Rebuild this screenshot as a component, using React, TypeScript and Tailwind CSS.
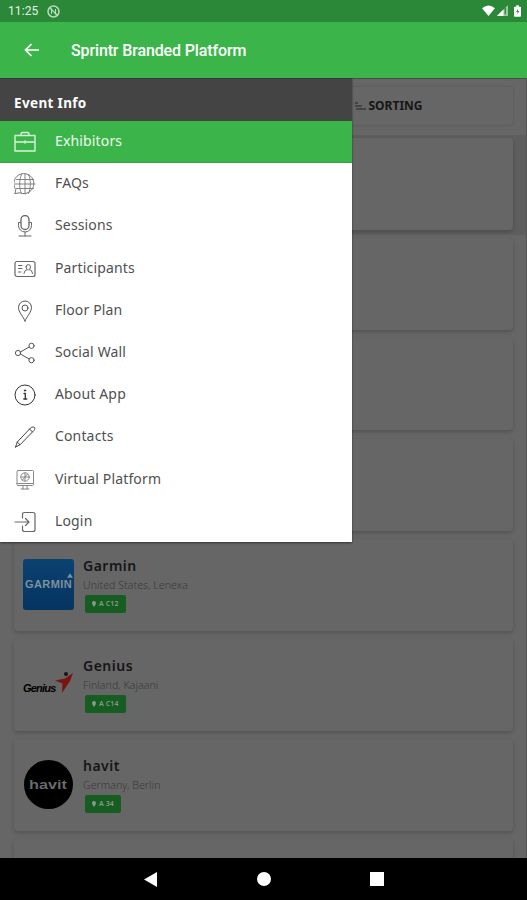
import React from 'react';

type IconProps = { children: React.ReactNode; className?: string };

// Thin outline icon on a 22px grid
const LineIcon: React.FC<IconProps> = ({ children, className }) => (
    <svg
        width="22"
        height="22"
        viewBox="0 0 22 22"
        fill="none"
        stroke="currentColor"
        strokeWidth="1"
        strokeLinecap="round"
        strokeLinejoin="round"
        className={className}
    >
        {children}
    </svg>
);

const menuItems = [
    {
        label: 'Exhibitors',
        icon: (
            <LineIcon className="text-[#d9f3dc]">
                <path strokeWidth="1.4" d="M1 4.500h20v15.500H1zM7 4.500V3Q7 1.500 8.500 1.500h5Q15 1.500 15 3v1.500M1 11h20" />
                <path d="M11 9.500v3" />
            </LineIcon>
        ),
    },
    {
        label: 'FAQs',
        icon: (
            <LineIcon className="text-[#777]">
                <path d="M1 20.500l.8-4A10 10 0 1 1 6 19.800L1 20.500z" />
                <path d="M11 1v20M2.500 6.500h17M1 11h20M2.500 15.500h17M7.500 1.500c-2.500 5-2.500 14 0 19M14.500 1.500c2.500 5 2.500 14 0 19" strokeWidth=".9" />
            </LineIcon>
        ),
    },
    {
        label: 'Sessions',
        icon: (
            <LineIcon className="text-[#666]">
                <rect x="7" y="0.500" width="8" height="14" rx="4" strokeWidth="1.300" />
                <path d="M6.500 7.500H4.500v3a6.500 6.500 0 0 0 13 0v-3h-2M11 17v4M5 21h12" />
            </LineIcon>
        ),
    },
    {
        label: 'Participants',
        icon: (
            <LineIcon className="text-[#666]">
                <rect x="1" y="3.500" width="20" height="15" rx="2" strokeWidth="1.200" />
                <path d="M4.500 7.500H8M4.500 10.500H8M4.500 14H7M10 15.500l1-2.800 1.800-.9M18.500 15.500l-1-2.800-1.800-.9M12.100 8.800a2.200 2.200 0 1 1 4.400 0c0 1.700-.9 3-2.200 3s-2.200-1.300-2.200-3z" />
            </LineIcon>
        ),
    },
    {
        label: 'Floor Plan',
        icon: (
            <LineIcon className="text-[#555]">
                <path d="M11 21C9.500 17 4.500 12 4.500 7.500a6.500 6.500 0 0 1 13 0C17.500 12 12.500 17 11 21z" />
                <circle cx="11" cy="8" r="3" />
            </LineIcon>
        ),
    },
    {
        label: 'Social Wall',
        icon: (
            <LineIcon className="text-[#555]">
                <circle cx="4" cy="11" r="2.600" />
                <circle cx="17.500" cy="3.800" r="2.600" />
                <circle cx="17.500" cy="18.200" r="2.600" />
                <path d="M6.400 10l8.800-5M6.400 12l8.800 5" />
            </LineIcon>
        ),
    },
    {
        label: 'About App',
        icon: (
            <LineIcon className="text-[#333]">
                <circle cx="11" cy="11" r="10" />
                <path d="M10 9.500h1.300V15M9.800 15h3" strokeWidth="1.300" />
                <circle cx="11" cy="6.500" r=".7" fill="currentColor" />
            </LineIcon>
        ),
    },
    {
        label: 'Contacts',
        icon: (
            <LineIcon className="text-[#444]">
                <path d="M1.500 21l1.800-5L16.500 2q1.200-1.200 2.800-1t1.500 1.300q0 1.200-1 2.300L6 18.800 1.500 21zM3.300 16L6 18.800M15.500 3l3 3" />
            </LineIcon>
        ),
    },
    {
        label: 'Virtual Platform',
        icon: (
            <LineIcon className="text-[#888]">
                <rect x="3" y="1.500" width="16.500" height="15" rx="1" />
                <circle cx="11" cy="8" r="4.200" />
                <path d="M7 8h8M11 4v8M8.500 11l5-6M3 14.500h16.500M9 17v3M13 17v3M7 20h8" />
            </LineIcon>
        ),
    },
    {
        label: 'Login',
        icon: (
            <LineIcon className="text-[#666]">
                <path d="M8.500 7V3.500q0-2 2-2H19q2 0 2 2v15q0 2-2 2h-8.500q-2 0-2-2V15" strokeWidth="1.200" />
                <path d="M1 11h14M11.500 7.500L15 11l-3.500 3.500" strokeWidth="1.200" />
            </LineIcon>
        ),
    },
];

const GarminLogo = () => (
    <div className="relative w-[51px] h-[51px] rounded-[3px] bg-linear-to-b from-[#0a4272] to-[#063460] overflow-hidden flex items-center justify-center text-[#7f8f9c]">
        <span className="font-['Liberation_Sans'] text-[11px] font-bold tracking-[0.4px]">GARMIN</span>
        <svg className="absolute left-[44px] top-[14px]" width="6" height="5" viewBox="0 0 7 5">
            <path d="M3.500 0L7 5H0z" fill="currentColor" />
        </svg>
    </div>
);

const GeniusLogo = () => (
    <div className="relative w-[51px] h-[51px]">
        <span className="absolute left-0 top-[21px] font-['Liberation_Sans'] text-[11px] leading-[16px] font-bold italic tracking-[-0.8px] text-black">
            Genius
        </span>
        <svg className="absolute left-[32px] top-[12px]" width="19" height="24" viewBox="0 0 19 24">
            <path d="M0 9.500l10-2L18 2l-3 8-8 12 .5-9.500z" fill="#781511" />
            <circle cx="11" cy="3" r="2" fill="#161616" />
        </svg>
    </div>
);

const HavitLogo = () => (
    <div className="w-[51px] h-[51px] flex items-center justify-center">
        <div className="w-[49px] h-[49px] rounded-full bg-black flex items-center justify-center">
            <span className="font-['Liberation_Sans'] text-[12px] leading-[14px] font-bold scale-x-[1.350] text-[#6a6a6a]">havit</span>
        </div>
    </div>
);

const exhibitors = [
    { name: 'Garmin', place: 'United States, Lenexa', booth: 'A C12', logo: <GarminLogo /> },
    { name: 'Genius', place: 'Finland, Kajaani', booth: 'A C14', logo: <GeniusLogo /> },
    { name: 'havit', place: 'Germany, Berlin', booth: 'A 34', logo: <HavitLogo /> },
];

const cardShadow = 'rounded-[4px] bg-[#666] shadow-[0_2px_4px_rgba(0,0,0,0.2)]';

const ExhibitorList = () => (
    <div className="flex flex-col">
        {/* Rows covered by the open menu, the first one is selected */}
        {[0, 1, 2, 3].map((row) => (
            <div key={row} className={`h-[100.2px] shrink-0 pl-[14px] pr-[13px] pt-[3px] ${row === 0 ? 'bg-[#5e5e5e]' : ''}`}>
                <div className={`h-[92px] ${cardShadow}`} />
            </div>
        ))}
        {exhibitors.map((item) => (
            <div key={item.name} className="h-[100.2px] shrink-0 pl-[14px] pr-[13px] pt-[3px]">
                <div className={`h-[92px] flex pl-[9px] pt-5 ${cardShadow}`}>
                    {item.logo}
                    <div className="ml-[9px] -mt-[3px] flex flex-col items-start">
                        <span className="text-[14px] leading-[20px] font-semibold tracking-[0.5px] text-[#161616]">{item.name}</span>
                        <span className="mt-px text-[10.500px] leading-[16px] font-light tracking-[0.090px] text-[#393939]">{item.place}</span>
                        <span className="mt-[2px] ml-[2px] h-[18px] px-[7px] rounded-[2px] bg-[#155d20] flex items-center gap-[3px] text-[7px] font-semibold tracking-[0.1px] text-[#8b978c]">
                            <svg width="4" height="6" viewBox="0 0 4 6" fill="currentColor">
                                <path d="M2 6Q0 3.500 0 2a2 2 0 0 1 4 0q0 1.500-2 4z" />
                            </svg>
                            {item.booth}
                        </span>
                    </div>
                </div>
            </div>
        ))}
        <div className="h-[100.2px] shrink-0 pl-[14px] pr-[13px] pt-[3px]">
            <div className={`h-[92px] ${cardShadow}`} />
        </div>
    </div>
);

const SideMenu = () => (
    <nav className="absolute left-0 top-0 w-[352px] bg-white shadow-[0_1px_2px_rgba(0,0,0,0.5)]">
        <div className="h-[42.500px] pt-[6px] pl-[14px] flex items-center bg-[#444] border-t border-[#37343b] text-[13.500px] font-bold tracking-[0.350px] text-white">
            Event Info
        </div>
        {menuItems.map((item, i) => (
            <div
                key={item.label}
                className={`h-[42.200px] pl-[14px] flex items-center gap-[19px] ${i === 0 ? 'bg-[#3bb54a] border-b border-[#22ab38] text-[#effaf0]' : 'text-[#505050]'}`}
            >
                <span className="mt-px">{item.icon}</span>
                <span className="-mt-px text-[14px] leading-[20px] tracking-[0.150px]">{item.label}</span>
            </div>
        ))}
    </nav>
);

export default function App() {
    return (
        <div className="w-[527px] h-[900px] flex flex-col overflow-hidden font-['Noto_Sans',sans-serif]">
            {/* Status bar */}
            <div className="h-[22px] shrink-0 flex items-center pl-[8px] pr-[6px] bg-[#2b8838] text-[#e2f1e3] font-['Roboto']">
                <span className="text-[12px] tracking-[0.1px]">11:25</span>
                <svg className="ml-[9px]" width="13" height="13" viewBox="0 0 13 13" fill="none" stroke="#b9dabc">
                    <circle cx="6.500" cy="6.500" r="5.500" strokeWidth="1.500" />
                    <path d="M4.500 9V4l4 5V4M3 3l7 7" strokeWidth="1.100" />
                </svg>
                <div className="ml-auto -mt-px flex items-center gap-[2px]">
                    <svg width="13" height="11" viewBox="0 0 14 12">
                        <path d="M0 3.500Q7-2.500 14 3.500L7 12z" fill="#fff" />
                    </svg>
                    <svg width="11" height="11" viewBox="0 0 12 12">
                        <path d="M12 0v12H0z" fill="#9acb9f" />
                        <path d="M7 5v7H0z" fill="#fff" />
                        <path d="M9 3v7" stroke="#2b8838" strokeWidth="1.500" />
                    </svg>
                    <svg className="ml-[4px]" width="7" height="12" viewBox="0 0 8 13">
                        <path d="M2.500 0h3v1.500H7q1 0 1 1V12q0 1-1 1H1q-1 0-1-1V2.500q0-1 1-1h1.500z" fill="#fff" />
                        <path d="M4.500 4L2.500 7.500H4V10l2-3.500H4.500z" fill="#2b8838" />
                    </svg>
                </div>
            </div>

            {/* App bar */}
            <header className="h-[56px] shrink-0 flex items-center pl-[24px] bg-[#3bb54a] text-white">
                <svg width="16" height="14" viewBox="0 0 16 14" fill="none" stroke="currentColor" strokeWidth="1.700">
                    <path d="M15 7H2M7.500 1L1.500 7l6 6" />
                </svg>
                <h1 className="ml-[31px] mt-[2px] font-['Roboto'] text-[16px] font-medium tracking-[-0.130px]">Sprintr Branded Platform</h1>
            </header>

            <main className="relative flex-1 min-h-0 overflow-hidden bg-[#666] border-r border-[#565656]">
                <div className="h-[57px] px-[14px] pt-[8px] flex gap-3 border-t border-[#4b4b4b] shadow-[0_1px_2px_rgba(0,0,0,0.2)] -mr-px">
                    <div className="h-[38px] flex-1 rounded-[3px] shadow-[0_0_2px_rgba(0,0,0,0.25)]" />
                    <div className="h-[38px] flex-1 flex items-center justify-center gap-[2px] pr-[3px] rounded-[3px] shadow-[0_0_2px_rgba(0,0,0,0.25)] text-[12px] font-bold text-[#161616]">
                        <svg width="11" height="8" viewBox="0 0 11 8" stroke="#222" strokeWidth="1.200">
                            <path d="M0 1h3M0 4h7M1 7h10" />
                        </svg>
                        SORTING
                    </div>
                </div>
                <ExhibitorList />
                <SideMenu />
            </main>

            {/* Android navigation */}
            <footer className="h-[42px] shrink-0 bg-black flex items-center pl-[144px]">
                <svg width="13" height="15" viewBox="0 0 13 15">
                    <path d="M13 0v15L0 7.500z" fill="#fff" />
                </svg>
                <div className="ml-[100px] w-[14px] h-[14px] rounded-full bg-white" />
                <div className="ml-[99px] w-[14px] h-[14px] bg-white" />
            </footer>
        </div>
    );
}
